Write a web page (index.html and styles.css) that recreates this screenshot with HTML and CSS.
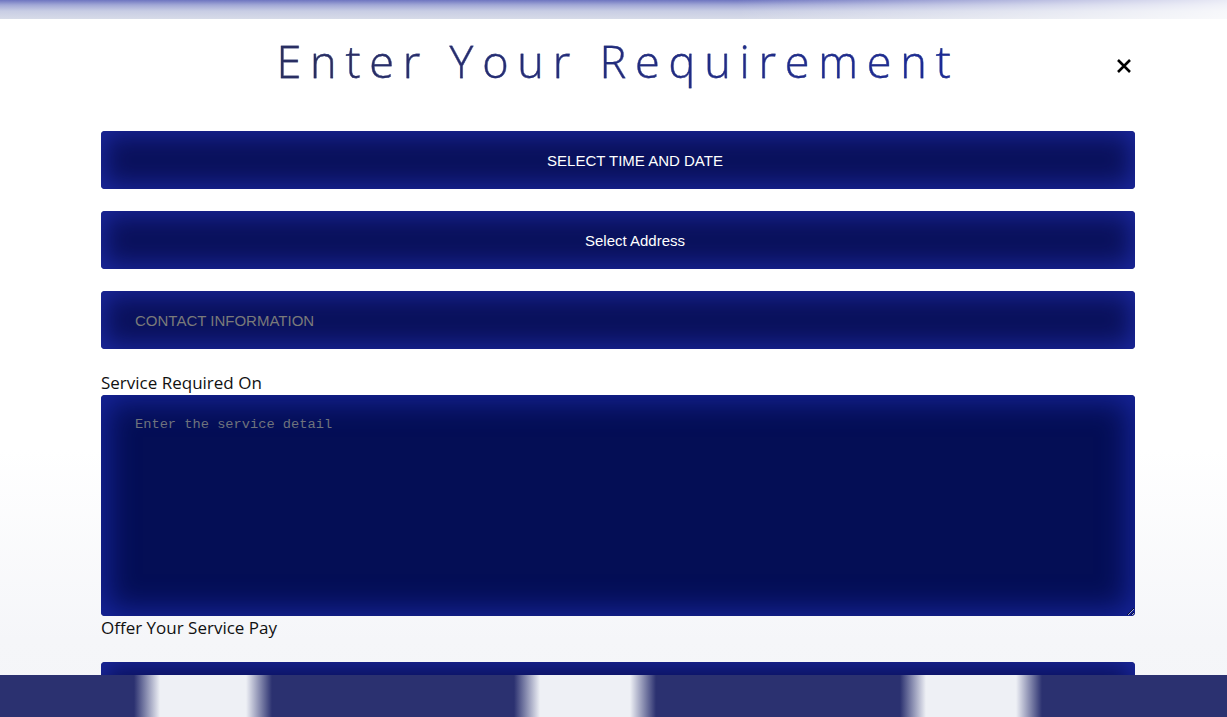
FILE: index.html
```html
<!DOCTYPE html>
<html>
<head>
<meta charset="utf-8">
<link rel="stylesheet" href="styles.css">
</head>
<body>
<div class="topbar"></div>
<main class="modal">
  <header class="modal-head">
    <h1 class="title">Enter Your Requirement</h1>
    <button class="close" aria-label="Close">
      <svg width="16" height="16" viewBox="0 0 16 16"><path d="M2 2 L14 14 M14 2 L2 14" stroke="#000" stroke-width="2.6" stroke-linecap="butt"/></svg>
    </button>
  </header>
  <form class="form">
    <button type="button" class="field btn upper">SELECT TIME AND DATE</button>
    <button type="button" class="field btn">Select Address</button>
    <input class="field input" type="text" placeholder="CONTACT INFORMATION">
    <label class="label">Service Required On</label>
    <textarea class="field textarea" placeholder="Enter the service detail"></textarea>
    <label class="label label-pay">Offer Your Service Pay</label>
    <input class="field input" type="text">
  </form>
</main>
<div class="footbar"></div>
</body>
</html>
```
FILE: styles.css
```css
html, body {
  margin: 0;
  padding: 0;
}
body {
  width: 1227px;
  height: 717px;
  overflow: hidden;
  background: linear-gradient(to bottom, #ffffff 0, #ffffff 450px, #f5f6f9 640px, #f4f5f8 717px);
  font-family: "Open Sans", "Noto Sans", sans-serif;
  position: relative;
}
.topbar {
  height: 19px;
  background:
    linear-gradient(to right, rgba(255,255,255,0) 0, rgba(255,255,255,0) 60%, rgba(255,255,255,0.85) 100%),
    linear-gradient(to bottom, #6e75c0 0, #a2a8d6 5px, #c8cde4 11px, #d7dbe8 19px);
}
.modal {
  width: 1034px;
  margin: 0 0 0 101px;
}
.modal-head {
  position: relative;
  height: 112px;
  display: flex;
  justify-content: center;
}
.title {
  margin: 0;
  padding-top: 14px;
  font-family: "Open Sans", sans-serif;
  font-weight: 300;
  font-size: 45px;
  line-height: 56px;
  letter-spacing: 8.8px;
  background: linear-gradient(to right, #2b2e58 0, #232c78 40%, #1a2a9c 100%);
  -webkit-background-clip: text;
  background-clip: text;
  color: transparent;
  -webkit-text-stroke: 0.3px #25307a;
}
.close {
  position: absolute;
  right: 3px;
  top: 39px;
  width: 16px;
  height: 16px;
  padding: 0;
  border: 0;
  background: none;
  line-height: 0;
}
.form {
  display: flex;
  flex-direction: column;
}
.field {
  box-sizing: border-box;
  width: 1034px;
  height: 58px;
  border: 0;
  border-radius: 4px;
  background: #0a115c;
  box-shadow: inset 0 0 24px 4px #1b289e;
  outline: none;
  margin: 0 0 22px 0;
  font-family: "Liberation Sans", Arial, sans-serif;
  font-size: 15px;
  color: #ffffff;
}
.btn {
  text-align: center;
  padding: 0 0 0 34px;
  cursor: pointer;
}
.input {
  padding: 0 34px;
}
.input::placeholder {
  color: #7a7a7a;
}
.label {
  font-family: "Open Sans", sans-serif;
  font-size: 17px;
  line-height: 24px;
  color: #111;
}
.textarea {
  height: 221px;
  margin: 0;
  padding: 22px 34px;
  font-family: "Liberation Mono", monospace;
  font-size: 13.7px;
  line-height: 16px;
  background: #040e55;
  box-shadow: inset 0 0 30px 6px #17259c;
  resize: vertical;
}
.textarea::placeholder {
  color: #6f737d;
}
.label-pay {
  margin-bottom: 22px;
}
.footbar {
  position: absolute;
  left: 0;
  bottom: 0;
  width: 1227px;
  height: 42px;
  background: linear-gradient(to right,
    #2b3170 0, #2b3170 134px, #eef0f5 160px, #eef0f5 246px, #2b3170 272px,
    #2b3170 514px, #eef0f5 540px, #eef0f5 630px, #2b3170 656px,
    #2b3170 900px, #eef0f5 926px, #eef0f5 1016px, #2b3170 1042px, #2b3170 100%);
}
```
